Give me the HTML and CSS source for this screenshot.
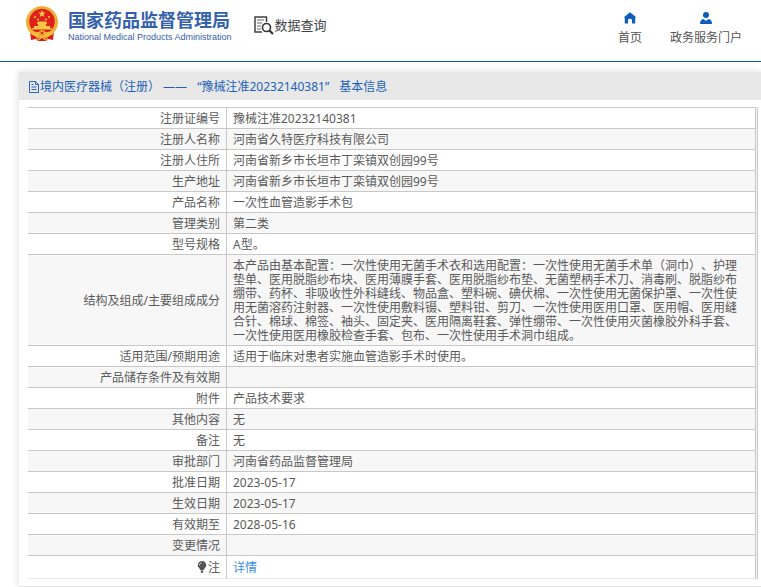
FILE: index.html
```html
<!DOCTYPE html>
<html lang="zh-CN">
<head>
<meta charset="utf-8">
<meta name="viewport" content="width=device-width, initial-scale=1">
<title>国家药品监督管理局 数据查询</title>
<link rel="stylesheet" href="styles.css">
</head>
<body>
<header class="site-header">
  <div class="brand">
    <svg class="emblem" viewBox="0 0 34 36" aria-hidden="true">
      <path d="M5 25h24l-1 9-5-1-2 2h-8l-2-2-5 1z" fill="#d91e18"/>
      <circle cx="17" cy="16" r="16" fill="#eeb63d"/>
      <circle cx="17" cy="16" r="14.6" fill="none" stroke="#e0a436" stroke-width="1" stroke-dasharray="1.5 1.5"/>
      <circle cx="17" cy="15.5" r="12.8" fill="#df211b"/>
      <path d="M17 4l1 2.400 2.600.2-2 1.700.6 2.600-2.200-1.400-2.200 1.400.6-2.600-2-1.700 2.600-.2z" fill="#f7cf4b"/>
      <g fill="#f5c646"><circle cx="10" cy="11" r="1"/><circle cx="24" cy="11" r="1"/><circle cx="13" cy="13.500" r="1"/><circle cx="21" cy="13.500" r="1"/>
      <path d="M12 17l1-1.500h8l1 1.500v1H12zM9 20h16v2H9zM7 22h20v1.500H7zM13 18h8v2h-8z"/></g>
      <path d="M4 23q6 5 13 2 7 3 13-2l-2 5q-5 3-9 1l-2 2-2-2q-4 2-9-1z" fill="#f0ba3c"/>
      <circle cx="17" cy="27" r="3" fill="#e6a52e"/>
      <circle cx="17" cy="27" r="1.300" fill="#dd2a1b"/>
      <path d="M6 27l7 4-2 3M28 27l-7 4 2 3M13 34l4-3 4 3" fill="none" stroke="#f3c14a" stroke-width="1.200"/>
    </svg>
    <div class="brand-text">
      <div class="brand-cn">国家药品监督管理局</div>
      <div class="brand-en">National Medical Products Administration</div>
    </div>
  </div>
  <div class="section">
    <svg class="section-icon" viewBox="0 0 20 19" aria-hidden="true">
      <path d="M12.500 6V1H1v15h7" fill="none" stroke="#414141" stroke-width="1.500"/>
      <path d="M3 4h7M3 7h5M3 10h4M3 13h4" stroke="#666" stroke-width="1.200"/>
      <circle cx="12.500" cy="11.500" r="4" fill="#fff" stroke="#333" stroke-width="1.600"/>
      <path d="M15.500 14.500l3.500 3.500" stroke="#333" stroke-width="2.200"/>
    </svg>
    <span>数据查询</span>
  </div>
  <nav class="links">
    <a href="#home"><svg viewBox="0 0 12 12" aria-hidden="true"><path d="M6 .3L.2 5v.8h.6V11.500H4V8q0-1.300 2-1.300T8 8v3.500h3.200V5.800h.6V5z" fill="#0b5cbd"/></svg><span>首页</span></a>
    <a href="#portal"><svg viewBox="0 0 12 12" aria-hidden="true"><circle cx="6" cy="3" r="3" fill="#0b5cbd"/><path d="M0 12q0-4.500 3.500-5L6 9l2.500-2Q12 7.500 12 12z" fill="#0b5cbd"/></svg><span>政务服务门户</span></a>
  </nav>
</header>
<main class="card">
  <h1 class="card-title">
    <span class="category"><svg viewBox="0 0 12 12" aria-hidden="true"><path d="M1.500.5h6l3 3v8h-9zM7.500.5v3h3M3.500 3.500h2M3.500 6h5M3.500 8.500h5" fill="none" stroke="#2868bd"/></svg>境内医疗器械（注册） ——</span>
    <span>“豫械注准20232140381”</span>
    <span>基本信息</span>
  </h1>
  <div class="table-wrap">
    <table class="info">
      <colgroup><col class="label-col"><col></colgroup>
      <tbody>
        <tr><th scope="row">注册证编号</th><td>豫械注准20232140381</td></tr>
        <tr><th scope="row">注册人名称</th><td>河南省久特医疗科技有限公司</td></tr>
        <tr><th scope="row">注册人住所</th><td>河南省新乡市长垣市丁栾镇双创园99号</td></tr>
        <tr><th scope="row">生产地址</th><td>河南省新乡市长垣市丁栾镇双创园99号</td></tr>
        <tr><th scope="row">产品名称</th><td>一次性血管造影手术包</td></tr>
        <tr><th scope="row">管理类别</th><td>第二类</td></tr>
        <tr><th scope="row">型号规格</th><td>A型。</td></tr>
        <tr><th scope="row">结构及组成/主要组成成分</th><td>本产品由基本配置：一次性使用无菌手术衣和选用配置：一次性使用无菌手术单（洞巾）、护理垫单、医用脱脂纱布块、医用薄膜手套、医用脱脂纱布垫、无菌塑柄手术刀、消毒刷、脱脂纱布绷带、药杯、非吸收性外科缝线、物品盒、塑料碗、碘伏棉、一次性使用无菌保护罩、一次性使用无菌溶药注射器、一次性使用敷料镊、塑料钳、剪刀、一次性使用医用口罩、医用帽、医用缝合针、棉球、棉签、袖头、固定夹、医用隔离鞋套、弹性绷带、一次性使用灭菌橡胶外科手套、一次性使用医用橡胶检查手套、包布、一次性使用手术洞巾组成。</td></tr>
        <tr><th scope="row">适用范围/预期用途</th><td>适用于临床对患者实施血管造影手术时使用。</td></tr>
        <tr><th scope="row">产品储存条件及有效期</th><td></td></tr>
        <tr><th scope="row">附件</th><td>产品技术要求</td></tr>
        <tr><th scope="row">其他内容</th><td>无</td></tr>
        <tr><th scope="row">备注</th><td>无</td></tr>
        <tr><th scope="row">审批部门</th><td>河南省药品监督管理局</td></tr>
        <tr><th scope="row">批准日期</th><td>2023-05-17</td></tr>
        <tr><th scope="row">生效日期</th><td>2023-05-17</td></tr>
        <tr><th scope="row">有效期至</th><td>2028-05-16</td></tr>
        <tr><th scope="row">变更情况</th><td></td></tr>
        <tr class="note"><th scope="row"><svg viewBox="0 0 10 12" aria-hidden="true"><path d="M5 0a4.300 4.300 0 0 1 4.300 4.300C9.300 6.500 7 7.500 6.700 9H3.300C3 7.500.7 6.500.7 4.300A4.300 4.300 0 0 1 5 0zM3.700 9.500h2.600v1L5.600 12H4.400l-.7-1.500z" fill="#555"/><path d="M2.300 4.200Q2.500 2.200 4.500 1.800" fill="none" stroke="#ddd"/></svg>注</th><td><a href="#detail">详情</a></td></tr>
      </tbody>
    </table>
  </div>
</main>
</body>
</html>
```
FILE: styles.css
```css
* { box-sizing: border-box; }

body {
  margin: 0;
  background: #fff;
  color: #5a5a5a;
  font: 12px/14px "Noto Sans", "Noto Sans CJK SC", sans-serif;
  text-spacing-trim: space-all;
}

a { text-decoration: none; }

.site-header {
  display: flex;
  align-items: flex-start;
  height: 62px;
  padding: 0 19px 0 25px;
  border-bottom: 1px solid #17569b;
}

.brand {
  display: flex;
  gap: 9px;
  padding-top: 6px;
  color: #3560ab;
}

.emblem { width: 34px; height: 36px; }

.brand-cn {
  padding-top: 4px;
  font-size: 18px;
  font-weight: 700;
  line-height: 20px;
  white-space: nowrap;
}

.brand-en {
  font: 9px/14px "Liberation Sans", sans-serif;
  white-space: nowrap;
}

.section {
  display: flex;
  gap: 1px;
  margin-left: 22px;
  padding-top: 16px;
  color: #444;
  font-size: 13px;
  line-height: 18px;
  white-space: nowrap;
}

.section-icon { width: 20px; height: 19px; }

.links {
  display: flex;
  gap: 28px;
  margin-left: auto;
  padding-top: 12px;
}

.links a {
  display: flex;
  flex-direction: column;
  align-items: center;
  gap: 7px;
  color: #555;
  white-space: nowrap;
}

.links svg { width: 12px; height: 12px; }

.card {
  margin: 10px 0 0 19px;
  padding-bottom: 7px;
  border-bottom: 1px solid #e4e4e4;
  background: #fff;
  box-shadow: 0 0 8px rgba(0, 0, 0, 0.14);
}

.card-title {
  display: flex;
  align-items: center;
  gap: 10px;
  height: 28px;
  margin: 0;
  padding: 2px 0 0 9px;
  background: #e8e8e8;
  color: #1c61b8;
  font-size: 12px;
  font-weight: 400;
  white-space: nowrap;
}

.category {
  display: flex;
  align-items: center;
}

.card-title svg { width: 12px; height: 12px; }

.table-wrap {
  margin: 7px 3px 0 9px;
  padding-right: 1px;
  border-right: 1px solid #ccc;
  background: #f2f2f2;
}

.info {
  width: 100%;
  border-collapse: separate;
  border-spacing: 0;
  border-top: 1px solid #c8c8c8;
  border-right: 1px solid #c8c8c8;
  background: #fff;
  table-layout: fixed;
}

.label-col { width: 199px; }

.info th,
.info td {
  height: 21px;
  padding: 4px 12px 2px 6px;
  border-bottom: 1px solid #c8c8c8;
  font-weight: 400;
  text-align: left;
  vertical-align: middle;
}

.info th {
  padding-right: 6px;
  border-right: 1px solid #c8c8c8;
  text-align: right;
}

.info tr:nth-child(even) { background: #f7f7f7; }

.info .note th,
.info .note td {
  height: 23px;
  border-bottom-color: #eaeaea;
}

.note svg {
  width: 10px;
  height: 12px;
  margin-right: 1px;
  vertical-align: -1px;
}

.note a { color: #3a8ee6; }
```
